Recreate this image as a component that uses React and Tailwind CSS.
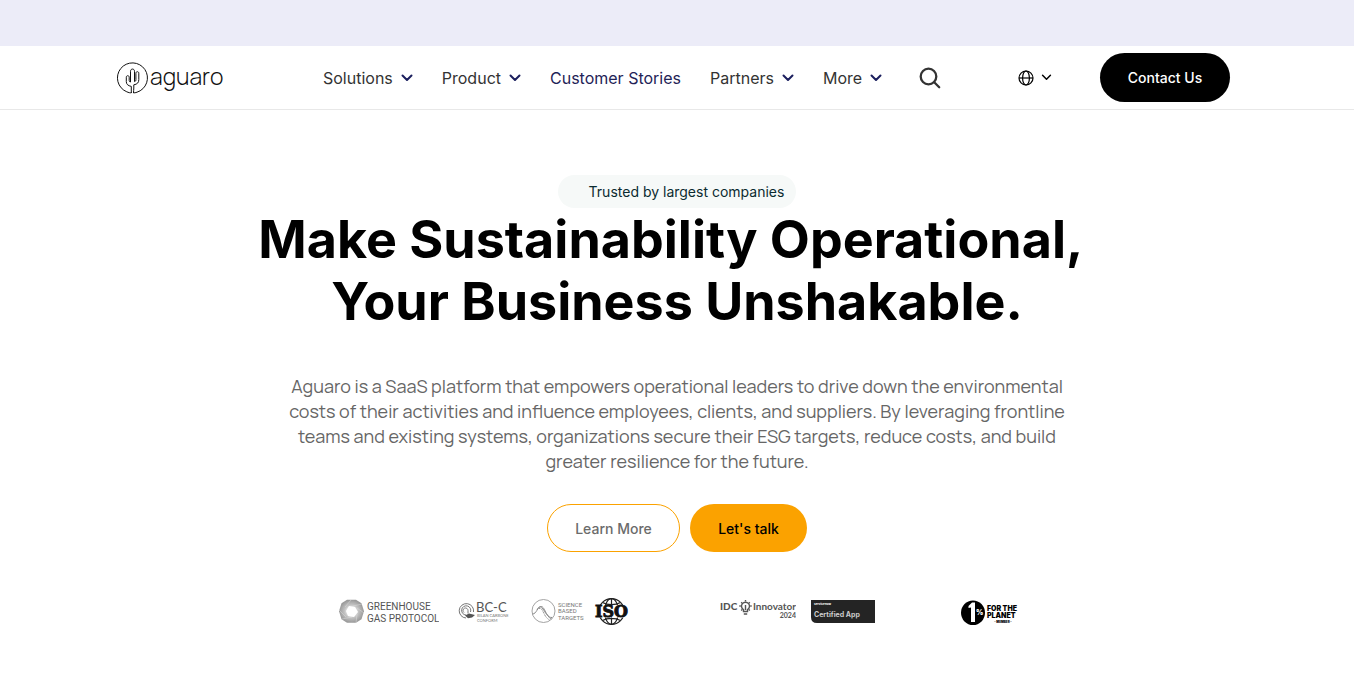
import React from "react";

const navItems = [
  { label: "Solutions", menu: true },
  { label: "Product", menu: true },
  { label: "Customer Stories", menu: false },
  { label: "Partners", menu: true },
  { label: "More", menu: true },
];

function Chevron({ className }) {
  return (
    <svg className={className} viewBox="0 0 12 8" fill="none" stroke="currentColor" strokeLinecap="round" strokeLinejoin="round">
      <path d="M1.500 1.500 6 6l4.500-4.500" />
    </svg>
  );
}

function AguaroLogo() {
  return (
    <svg className="block h-8 w-[107px]" viewBox="0 0 107 32" role="img" aria-label="aguaro">
      <g fill="none" stroke="#111" strokeWidth="1" strokeLinecap="round" strokeLinejoin="round">
        <path d="M14.300 30.700V24.400c-3.300-.6-5-2.200-5-4.800v-4.400c0-2 2.900-2 2.900 0v3.400c0 .8.400 1.300 1.300 1.400V9.300c0-3 4-3 4 0v10.300c1-.2 1.400-.8 1.400-1.900v-6.500c0-2 2.900-2 2.900 0v6.400c0 3-1.400 4.600-5 5.200v3.200c0 1.800-.3 3.200-.3 4.700" />
        <path d="M14.300 30.700c-1 .6-3-.3-4.500-.9A15 15 0 1 1 20 30.200c-1.500.5-2.500.9-3.500.5" />
      </g>
      <text x="33" y="23" fontFamily="Manrope, Lato, sans-serif" fontWeight="300" fontSize="23" fill="#111">aguaro</text>
    </svg>
  );
}

function Header() {
  return (
    <header className="h-16 border-b border-[#e8e8e8]">
      <div className="mx-auto flex h-full max-w-[1120px] items-center pr-[7px]">
        <a href="#" className="shrink-0">
          <AguaroLogo />
        </a>
        <nav className="ml-[99px] flex items-center gap-[29px] text-[16px] leading-6">
          {navItems.map((item) =>
            item.menu ? (
              <button key={item.label} type="button" className="flex items-center gap-2 whitespace-nowrap text-[#333]">
                {item.label}
                <Chevron className="h-2 w-3 stroke-2 text-[#1b1f5e]" />
              </button>
            ) : (
              <a key={item.label} href="#" className="whitespace-nowrap text-[#1f2357]">
                {item.label}
              </a>
            )
          )}
        </nav>
        <button type="button" aria-label="Search" className="ml-[37px]">
          <svg className="h-[22px] w-[22px]" viewBox="0 0 22 22" fill="none" stroke="#333" strokeWidth="2.300" strokeLinecap="round">
            <circle cx="9.500" cy="9.500" r="7.800" />
            <path d="m15.200 15.200 5 5" />
          </svg>
        </button>
        <button type="button" aria-label="Language" className="ml-auto mr-12 flex items-center gap-[7px] text-black">
          <svg className="h-4 w-4" viewBox="0 0 16 16" fill="none" stroke="currentColor" strokeWidth="1.200">
            <circle cx="8" cy="8" r="7" />
            <ellipse cx="8" cy="8" rx="3.400" ry="7" />
            <path d="M1 8h14" />
          </svg>
          <Chevron className="h-[7px] w-[11px] stroke-[1.700]" />
        </button>
        <a href="#" className="flex h-[49px] w-[130px] items-center justify-center rounded-full bg-black text-[14px] font-medium text-white">
          Contact Us
        </a>
      </div>
    </header>
  );
}

function GhgLogo() {
  return (
    <svg className="h-7 w-[100px]" viewBox="0 0 100 28" role="img" aria-label="Greenhouse Gas Protocol">
      <defs>
        <radialGradient id="ghg">
          <stop offset="0.300" stopColor="#eee" />
          <stop offset="0.550" stopColor="#c4c4c4" />
          <stop offset="1" stopColor="#999" />
        </radialGradient>
      </defs>
      <path d="M8 1.800h9l5.500 3.500 2.500 8-2.500 8-5.500 3.500H8l-5.500-3.500L0 13.300l2.500-8z" fill="url(#ghg)" />
      <path d="M12 2 6 9M23 6l-9 2M25 15l-7-5M17 25l1-9M3 21l10-2M0 12l7 7" stroke="#ddd" strokeWidth=".5" />
      <path d="m10 8 6 1 3 5-4 5-6-1-2-5z" fill="#fff" />
      <g fontFamily="Roboto, sans-serif" fontSize="10" fill="#555">
        <text x="28" y="12">GREENHOUSE</text>
        <text x="28" y="24">GAS PROTOCOL</text>
      </g>
    </svg>
  );
}

function BccLogo() {
  return (
    <svg className="ml-[19px] h-7 w-[54px]" viewBox="0 0 54 28" role="img" aria-label="BC-C Bilan Carbone Conform">
      <g fill="none" stroke="#777" strokeWidth="1">
        <path d="M8 20A7.200 7.200 0 1 1 15.500 14" />
        <path d="M8 17A4.600 4.600 0 1 1 12.500 14" />
        <path d="M6 14.500a2.500 2.500 0 1 1 4-2v3" />
      </g>
      <path d="m7 17.500 4-2 6 1.500-3 2.500-4 .8z" fill="#555" />
      <g fontFamily="Lato, sans-serif" fill="#555">
        <text x="18" y="14" fontSize="13">BC-C</text>
        <text x="19" y="19" fontSize="4" fill="#777">BILAN CARBONE</text>
        <text x="19" y="24" fontSize="4" fill="#777">CONFORM</text>
      </g>
    </svg>
  );
}

function SbtLogo() {
  return (
    <svg className="ml-[19px] h-7 w-[53px]" viewBox="0 0 53 28" role="img" aria-label="Science Based Targets">
      <circle cx="12.500" cy="13" r="11.500" fill="none" stroke="#999" strokeWidth=".9" />
      <g fill="none" stroke="#888" strokeWidth="1">
        <path d="M1.500 16c4 0 5-7 8-7.500s4 4 6 7 3.500 5.500 5 5.500" />
        <path d="M6 12c2-4 4-4 6-1s5 9 9 8.500" />
        <path d="M8 10.500c4-2 4 8 10.500 11.500" strokeDasharray="1 .6" />
      </g>
      <g fontFamily="Roboto, sans-serif" fontSize="6" fill="#777">
        <text x="27" y="9">SCIENCE</text>
        <text x="27" y="15">BASED</text>
        <text x="27" y="22">TARGETS</text>
      </g>
    </svg>
  );
}

function IsoLogo() {
  return (
    <svg className="ml-[10px] h-7 w-[35px]" viewBox="0 0 35 28" role="img" aria-label="ISO">
      <g fill="none" stroke="#222" strokeWidth="1.200">
        <circle cx="17.500" cy="13.500" r="12.800" />
        <ellipse cx="17.500" cy="13.500" rx="7" ry="12.800" />
        <path d="M17.500 1v25M8.500 4.500c5 2.800 13 2.800 18 0M8.500 22.500c5-2.800 13-2.800 18 0" />
      </g>
      <path d="M0 7h35v12.500H0z" fill="#fff" />
      <text x="17.500" y="19" textAnchor="middle" fontFamily="'DejaVu Serif', serif" fontWeight="700" fontSize="16" fill="#111" stroke="#111" strokeWidth=".9">ISO</text>
    </svg>
  );
}

function IdcLogo() {
  return (
    <svg className="ml-[91px] h-7 w-[76px]" viewBox="0 0 76 28" role="img" aria-label="IDC Innovator 2024">
      <g fontFamily="Lato, sans-serif" fill="#555">
        <text x="0" y="12" fontSize="10" fontWeight="900">IDC</text>
        <text x="76" y="12" textAnchor="end" fontSize="10" fontWeight="700">Innovator</text>
        <text x="76" y="20" textAnchor="end" fontSize="7" fontWeight="700">2024</text>
      </g>
      <g fill="none" stroke="#555" strokeWidth="1.400">
        <path d="M23.500 13.500v-1.800a4 4 0 1 1 4 0v1.800zM23.800 16h3.400" />
        <path d="M25.500 7v5" />
        <path d="M25.500 2v1.500M20.800 8h-1.500M31.700 8h-1.500M21.200 4.200l1 1M29.800 4.200l-1 1M21.200 12.500l1-1M29.800 12.500l-1-1" />
      </g>
    </svg>
  );
}

function CertifiedAppLogo() {
  return (
    <svg className="ml-[15px] h-7 w-16" viewBox="0 0 64 28" role="img" aria-label="servicenow Certified App">
      <path d="M0 2h64v23H6q-6 0-6-6z" fill="#242424" />
      <g fontWeight="700">
        <text x="3" y="7" fontFamily="Inter, sans-serif" fontSize="3" fill="#fff">servicenow</text>
        <text x="3" y="19" fontFamily="Inter, sans-serif" fontSize="7" fill="#ccc">Certified App</text>
      </g>
    </svg>
  );
}

function PlanetLogo() {
  return (
    <svg className="ml-[86px] h-7 w-[59px]" viewBox="0 0 59 28" role="img" aria-label="1% for the Planet member">
      <ellipse cx="12" cy="14.800" rx="12" ry="12.300" fill="#000" />
      <path d="M7.500 8 11 4.500h3V24h-4V9.500L7.500 10z" fill="#fff" />
      <g fontFamily="Inter, sans-serif" fontWeight="900">
        <text x="15" y="17" fontSize="7" fill="#fff">%</text>
        <text x="26" y="13" fontSize="7">FOR THE</text>
        <text x="26" y="20" fontSize="7">PLANET</text>
        <text x="42" y="25" textAnchor="middle" fontSize="3">- MEMBER -</text>
      </g>
    </svg>
  );
}

function Hero() {
  return (
    <main className="flex flex-col items-center pt-[65px] text-center">
      <p className="flex h-[33px] items-center rounded-full bg-[#f6f9f8] pl-[31px] pr-3 text-[14px] text-[#0b2b30]">
        Trusted by largest companies
      </p>
      <h1 className="mt-px text-[52px] font-bold leading-[62px] text-black">
        Make Sustainability Operational,&nbsp;
        <br />
        Your Business Unshakable.
      </h1>
      <p className="mt-[41px] whitespace-nowrap font-[Manrope,Inter,sans-serif] text-[18px] leading-[25px] text-[#666]">
        Aguaro is a SaaS platform that empowers operational leaders to drive down the environmental
        <br />
        costs of their activities and influence employees, clients, and suppliers. By leveraging frontline
        <br />
        teams and existing systems, organizations secure their ESG targets, reduce costs, and build
        <br />
        greater resilience for the future.
      </p>
      <div className="mt-[30px] flex gap-[10px] text-[14px] font-medium">
        <a href="#" className="flex h-12 w-[133px] items-center justify-center rounded-full border border-[#fba200] text-[#6b6b6b]">
          Learn More
        </a>
        <a href="#" className="flex h-12 w-[117px] items-center justify-center rounded-full bg-[#fba200] text-black">
          Let's talk
        </a>
      </div>
      <div className="mt-[46px] flex items-center pl-1">
        <GhgLogo />
        <BccLogo />
        <SbtLogo />
        <IsoLogo />
        <IdcLogo />
        <CertifiedAppLogo />
        <PlanetLogo />
      </div>
    </main>
  );
}

export default function App() {
  return (
    <div className="min-h-screen bg-white pr-3 font-[Inter,sans-serif]">
      <div className="h-[46px] bg-[#ececf8]" />
      <Header />
      <Hero />
    </div>
  );
}
